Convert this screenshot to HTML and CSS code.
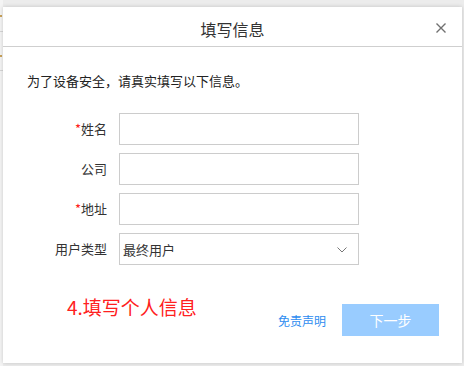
FILE: index.html
```html
<!DOCTYPE html>
<html lang="zh-CN">
<head>
<meta charset="utf-8">
<title>填写信息</title>
<link rel="stylesheet" href="styles.css">
</head>
<body>
<div class="backdrop">
  <span class="mark mark-a"></span>
  <span class="mark mark-b"></span>
  <span class="rule rule-a"></span>
  <span class="rule rule-b"></span>
</div>
<div class="dialog">
  <div class="dialog-header">
    <span class="dialog-title">填写信息</span>
    <span class="dialog-close">
      <svg width="10" height="10" viewBox="0 0 10 10"><path d="M0.5 0.5L9.5 9.5M9.5 0.5L0.5 9.5" stroke="#707070" stroke-width="1.4" fill="none"/></svg>
    </span>
  </div>
  <div class="dialog-body">
    <p class="intro">为了设备安全，请真实填写以下信息。</p>
    <div class="form">
      <div class="form-row">
        <label class="form-label"><span class="req">*</span>姓名</label>
        <div class="input"></div>
      </div>
      <div class="form-row">
        <label class="form-label">公司</label>
        <div class="input"></div>
      </div>
      <div class="form-row">
        <label class="form-label"><span class="req">*</span>地址</label>
        <div class="input"></div>
      </div>
      <div class="form-row">
        <label class="form-label">用户类型</label>
        <div class="input select">
          <span class="select-value">最终用户</span>
          <svg class="chevron" width="10" height="6" viewBox="0 0 10 6"><path d="M0.5 0.5L5 5L9.5 0.5" stroke="#777" stroke-width="1" fill="none"/></svg>
        </div>
      </div>
    </div>
    <div class="footer">
      <span class="annotation">4.填写个人信息</span>
      <div class="actions">
        <a class="disclaimer">免责声明</a>
        <span class="btn-next">下一步</span>
      </div>
    </div>
  </div>
</div>
</body>
</html>
```

FILE: styles.css
```css
html, body {
  margin: 0;
  padding: 0;
}
body {
  width: 464px;
  height: 366px;
  overflow: hidden;
  background: #ececec;
  font-family: "Noto Sans CJK SC", "Noto Sans", sans-serif;
  color: #333;
  position: relative;
  padding-top: 7px;
  box-sizing: border-box;
}
.backdrop {
  position: absolute;
  left: 0;
  top: 0;
  width: 3px;
  height: 366px;
  background: #f4f4f4;
}
.mark {
  position: absolute;
  left: 0;
  width: 2px;
  height: 2px;
  background: #c9a25a;
}
.mark-a { top: 15px; }
.mark-b { top: 55px; }
.rule {
  position: absolute;
  left: 0;
  width: 3px;
  height: 1px;
  background: #d6d6d6;
}
.rule-a { top: 31px; }
.rule-b { top: 70px; }
.dialog {
  position: relative;
  margin-left: 3px;
  width: 459px;
  height: 356px;
  background: #fff;
  box-shadow: 0 0 4px rgba(0, 0, 0, 0.18);
  display: flex;
  flex-direction: column;
}
.dialog-header {
  height: 39px;
  border-bottom: 1px solid #cfcfcf;
  display: flex;
  align-items: center;
  justify-content: center;
  position: relative;
}
.dialog-title {
  font-size: 16px;
  line-height: 20px;
  color: #333;
  margin-top: 5px;
}
.dialog-close {
  position: absolute;
  right: 16px;
  top: 16px;
  width: 10px;
  height: 10px;
  display: flex;
}
.dialog-body {
  padding: 24px 0 0 0;
}
.intro {
  margin: 0 0 22px 24px;
  font-size: 13px;
  line-height: 20px;
  color: #222;
}
.form {
  display: flex;
  flex-direction: column;
  gap: 8px;
}
.form-row {
  display: flex;
  align-items: center;
  gap: 12px;
}
.form-label {
  width: 80px;
  margin-left: 24px;
  text-align: right;
  font-size: 13px;
  line-height: 20px;
  color: #333;
}
.req {
  color: #ff1a1a;
}
.input {
  width: 240px;
  height: 32px;
  box-sizing: border-box;
  border: 1px solid #cccccc;
  background: #fff;
}
.select {
  display: flex;
  align-items: center;
  justify-content: space-between;
  padding: 0 11px 0 3px;
}
.select-value {
  font-size: 13px;
  color: #333;
}
.chevron {
  display: block;
  margin-top: 1px;
}
.footer {
  display: flex;
  align-items: flex-start;
  margin-top: 30px;
  padding-right: 23px;
}
.annotation {
  margin-left: 64px;
  font-size: 19px;
  line-height: 24px;
  color: #ff2020;
}
.actions {
  margin-left: auto;
  margin-top: 9px;
  display: flex;
  align-items: center;
  gap: 16px;
}
.disclaimer {
  font-size: 12px;
  color: #2d8cf0;
  line-height: 18px;
  margin-top: 2px;
}
.btn-next {
  width: 97px;
  height: 32px;
  background: #99ccff;
  color: #fff;
  font-size: 14px;
  display: flex;
  align-items: center;
  justify-content: center;
}
```
